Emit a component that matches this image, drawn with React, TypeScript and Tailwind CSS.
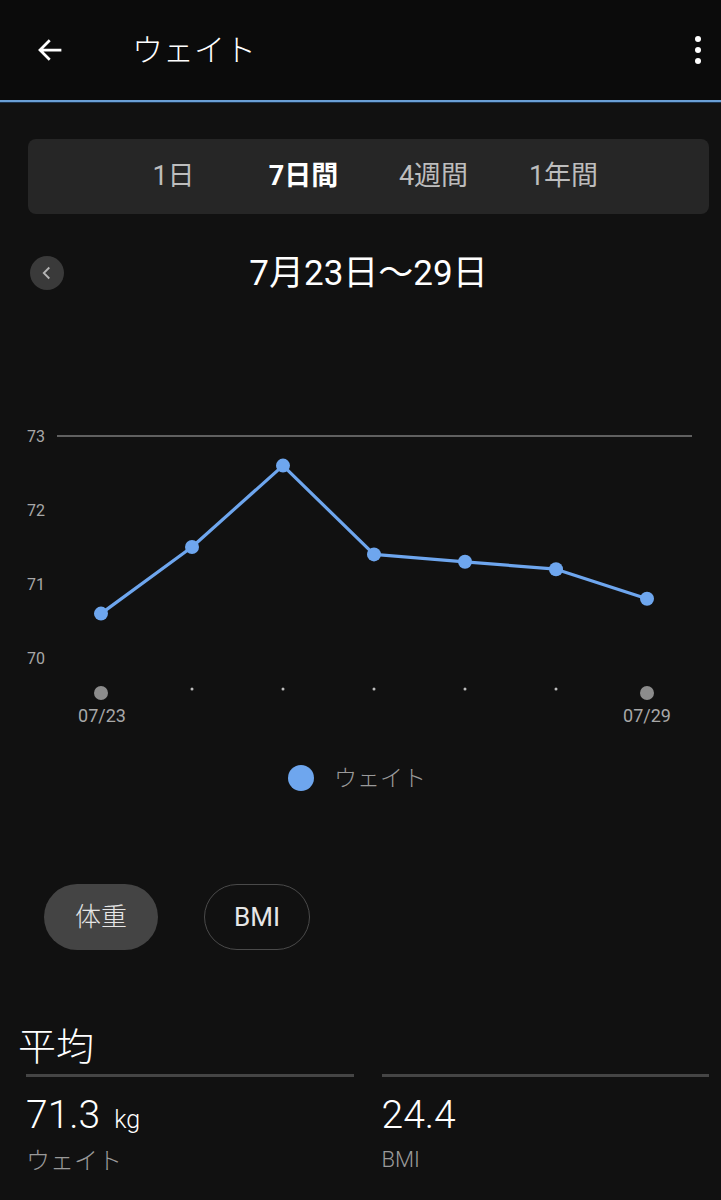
import React from "react";

const FONT = { fontFamily: 'Roboto, "Noto Sans CJK JP", sans-serif' };

const values = [70.6, 71.5, 72.6, 71.4, 71.3, 71.2, 70.8];
const xs = [101, 192, 283, 374, 465, 556, 647];
const OFF = 400;
const yOf = (v: number) => 436 + (73 - v) * 74 - OFF;

function Chart() {
  const pts = values.map((v, i) => `${xs[i]},${yOf(v)}`).join(" ");
  return (
    <svg width="721" height="340" viewBox="0 0 721 340" className="block">
      {[73, 72, 71, 70].map((v) => (
        <text key={v} x="27" y={yOf(v) + 6} fill="#a8a8a8" fontSize="16" style={FONT}>
          {v}
        </text>
      ))}
      <line x1="57" y1={yOf(73)} x2="692" y2={yOf(73)} stroke="#b0b0b0" strokeWidth="1" />
      <polyline points={pts} fill="none" stroke="#6ea6ee" strokeWidth="3.2" strokeLinejoin="round" />
      {values.map((v, i) => (
        <circle key={i} cx={xs[i]} cy={yOf(v)} r="7" fill="#6ea6ee" />
      ))}
      {xs.map((x, i) =>
        i === 0 || i === xs.length - 1 ? (
          <circle key={i} cx={x} cy={693 - OFF} r="7" fill="#8c8c8c" />
        ) : (
          <circle key={i} cx={x} cy={689 - OFF} r="1.5" fill="#bdbdbd" />
        )
      )}
      <text x="102" y={722 - OFF} textAnchor="middle" fill="#a8a8a8" fontSize="18" style={FONT}>
        07/23
      </text>
      <text x="647" y={722 - OFF} textAnchor="middle" fill="#a8a8a8" fontSize="18" style={FONT}>
        07/29
      </text>
    </svg>
  );
}

export default function App() {
  return (
    <div className="w-[721px] h-[1200px] bg-[#111111] text-white overflow-hidden" style={FONT}>
      {/* Header */}
      <div className="h-[100px] bg-[#0b0b0b] flex items-center">
        <div className="w-[132px] pl-[35px] flex items-center">
          <svg width="30" height="30" viewBox="0 0 24 24" fill="none">
            <path d="M20 12H4.5M11 5l-7 7 7 7" stroke="#ffffff" strokeWidth="2.2" strokeLinecap="square" />
          </svg>
        </div>
        <div className="text-[31px] leading-none font-light text-white">ウェイト</div>
        <div className="ml-auto mr-[20px] flex flex-col items-center gap-[5px]">
          <div className="w-[6px] h-[6px] rounded-full bg-white" />
          <div className="w-[6px] h-[6px] rounded-full bg-white" />
          <div className="w-[6px] h-[6px] rounded-full bg-white" />
        </div>
      </div>
      <div className="h-[3px] bg-[#6a9fd6] border-b border-[#1d3550]" />

      {/* Segmented control */}
      <div className="mt-[36px] ml-[28px] mr-[12px] h-[75px] rounded-[8px] bg-[#262626] flex items-center justify-center">
        <div className="w-[130px] text-center text-[27px] text-[#bdbdbd]">1日</div>
        <div className="w-[130px] text-center text-[27px] font-bold text-white">7日間</div>
        <div className="w-[130px] text-center text-[27px] text-[#bdbdbd]">4週間</div>
        <div className="w-[130px] text-center text-[27px] text-[#bdbdbd]">1年間</div>
      </div>

      {/* Date row */}
      <div className="mt-[42px] h-[34px] relative flex items-center justify-center">
        <div className="absolute left-[30px] top-0 w-[34px] h-[34px] rounded-full bg-[#3a3a3a] flex items-center justify-center">
          <svg width="22" height="22" viewBox="0 0 24 24" fill="none">
            <path d="M14.5 6l-6 6 6 6" stroke="#b5b5b5" strokeWidth="2" />
          </svg>
        </div>
        <div className="text-[35px] leading-none text-white ml-[16px]">7月23日〜29日</div>
      </div>

      {/* Chart */}
      <div className="mt-[110px]">
        <Chart />
      </div>

      {/* Legend */}
      <div className="mt-[25px] h-[26px] flex items-center justify-center gap-[20px] ml-[-7px]">
        <div className="w-[26px] h-[26px] rounded-full bg-[#6ea6ee]" />
        <div className="text-[23px] leading-none font-light text-[#9a9a9a]">ウェイト</div>
      </div>

      {/* Toggle buttons */}
      <div className="mt-[93px] ml-[44px] flex gap-[46px]">
        <div className="w-[114px] h-[66px] rounded-full bg-[#444444] flex items-center justify-center text-[26px] font-light text-[#e6e6e6]">
          体重
        </div>
        <div className="w-[106px] h-[66px] rounded-full border border-[#4a4a4a] flex items-center justify-center text-[26px] text-[#e6e6e6]">
          BMI
        </div>
      </div>

      {/* Average */}
      <div className="mt-[78px] ml-[18px] text-[38px] leading-none font-light text-white">平均</div>
      <div className="mt-[8px] ml-[26px] mr-[12px] grid grid-cols-2 gap-[28px]">
        <div>
          <div className="h-[3px] bg-[#454545]" />
          <div className="mt-[19px] flex items-baseline">
            <span className="text-[39px] font-light leading-none text-white">71.3</span>
            <span className="ml-[14px] text-[25px] font-light leading-none text-white">kg</span>
          </div>
          <div className="mt-[14px] text-[24px] leading-none font-light text-[#9a9a9a]">ウェイト</div>
        </div>
        <div>
          <div className="h-[3px] bg-[#454545]" />
          <div className="mt-[19px] flex items-baseline">
            <span className="text-[39px] font-light leading-none text-white">24.4</span>
          </div>
          <div className="mt-[14px] text-[22px] leading-none font-light text-[#9a9a9a]">BMI</div>
        </div>
      </div>
    </div>
  );
}
